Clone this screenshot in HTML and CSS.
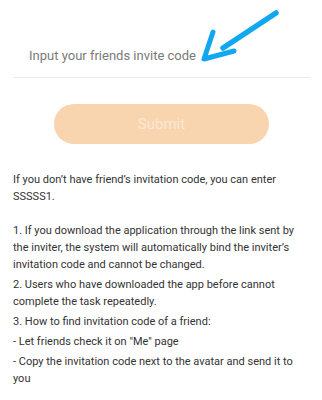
FILE: index.html
```html
<!DOCTYPE html>
<html lang="en">
<head>
<meta charset="utf-8">
<link rel="stylesheet" href="styles.css">
</head>
<body>
<div class="page">
  <div class="field">
    <input class="code-input" type="text" placeholder="Input your friends invite code">
  </div>
  <div class="actions">
    <button class="submit" type="button">Submit</button>
  </div>
  <div class="rules">
    <p class="intro">If you don’t have friend’s invitation code, you can enter SSSSS1.</p>
    <p>1. If you download the application through the link sent by the inviter, the system will automatically bind the inviter’s invitation code and cannot be changed.</p>
    <p>2. Users who have downloaded the app before cannot complete the task repeatedly.</p>
    <p>3. How to find invitation code of a friend:</p>
    <p>- Let friends check it on "Me" page</p>
    <p>- Copy the invitation code next to the avatar and send it to you</p>
  </div>
  <svg class="annotation" width="322" height="70" viewBox="0 0 322 70">
    <path d="M276 13 L223 48" fill="none" stroke="#12a8ef" stroke-width="5.5" stroke-linecap="round"/>
    <path d="M213 32 L204 59 L234 51" fill="none" stroke="#12a8ef" stroke-width="5" stroke-linecap="round" stroke-linejoin="round"/>
  </svg>
</div>
</body>
</html>
```

FILE: styles.css
```css
html, body {
  margin: 0;
  padding: 0;
  background: #ffffff;
}

.page {
  position: relative;
  width: 322px;
  padding: 34px 12px 0 13px;
  box-sizing: border-box;
  font-family: Roboto, "Noto Sans", sans-serif;
}

.field {
  border-bottom: 1px solid #ebebeb;
}

.code-input {
  display: block;
  width: 100%;
  height: 43px;
  box-sizing: border-box;
  border: none;
  outline: none;
  margin: 0;
  padding: 0 0 0 16px;
  background: transparent;
  font-family: Roboto, "Noto Sans", sans-serif;
  font-size: 13px;
  line-height: 43px;
  color: #333;
}

.code-input::placeholder {
  color: #7a7a7a;
}

.actions {
  display: flex;
  justify-content: center;
  padding-top: 26px;
}

.submit {
  width: 215px;
  height: 40px;
  border: none;
  border-radius: 20px;
  background: #f8d5ae;
  color: #fce8d3;
  font-family: Roboto, "Noto Sans", sans-serif;
  font-size: 15px;
  padding: 0;
  margin: 0;
}

.rules {
  padding-top: 27px;
  font-size: 11px;
  line-height: 17px;
  color: #333333;
}

.rules p {
  margin: 0 0 3px 0;
}

.rules p.intro {
  margin-bottom: 17px;
}

.annotation {
  position: absolute;
  left: 0;
  top: 0;
  pointer-events: none;
}
```
